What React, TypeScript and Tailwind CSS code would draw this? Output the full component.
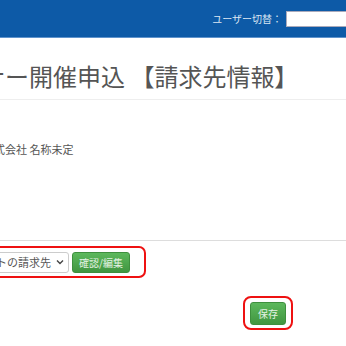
import React from "react";

const font = { fontFamily: '"Noto Sans CJK JP", "Noto Sans", sans-serif' };

export default function App() {
  return (
    <div className="w-[346px] h-[346px] overflow-hidden bg-white" style={font}>
      <header className="h-[38px] bg-[#0d5aa7] border-b border-[#5f93cc] flex items-center justify-end">
        <span className="text-[10px] text-[#dce7f3] mr-[4px]">ユーザー切替：</span>
        <div className="w-[70px] h-[16px] bg-white border border-[#aab] mr-[-10px] shrink-0" />
      </header>

      <div className="w-[346px]">
        <div className="pt-[25px] pb-[10px] border-b border-[#eeeeee]">
          <h1 className="ml-[-67px] whitespace-nowrap text-[24px] leading-[26px] text-[#555555] font-normal">
            セミナー開催申込 【請求先情報】
          </h1>
        </div>

        <div className="mt-[9px] ml-[-40px] whitespace-nowrap text-[13px] leading-[15px] font-bold text-[#c8c8c8]">
          請求先
        </div>

        <div className="mt-[18px] ml-[-17px] whitespace-nowrap text-[11px] leading-[14px] text-[#555555]">
          株式会社 名称未定
        </div>

        <div className="mt-[84px] border-t border-[#dddddd]" />

        <div className="mt-[5px] ml-[-65px] w-[211px] h-[32px] border-2 border-[#ee1111] rounded-[7px] flex items-center pl-[6px] gap-[3px]">
          <div className="w-[126px] h-[21px] border border-[#cccccc] rounded-[3px] bg-white flex items-center justify-between pl-[8px] pr-[4px] shrink-0">
            <span className="text-[11px] text-[#555555] whitespace-nowrap">デフォルトの請求先</span>
            <svg width="8" height="6" viewBox="0 0 8 6" className="shrink-0">
              <path d="M1 1.5 L4 4.5 L7 1.5" stroke="#444" strokeWidth="1.4" fill="none" />
            </svg>
          </div>
          <button className="w-[58px] h-[21px] rounded-[3px] border border-[#3e8f3e] bg-[linear-gradient(to_bottom,#5cb85c,#419641)] text-[10px] text-[#e4f2e4] flex items-center justify-center shrink-0">
            確認/編集
          </button>
        </div>

        <div className="mt-[18px] flex">
          <div className="ml-[243px] w-[50px] h-[34px] border-2 border-[#ee1111] rounded-[8px] flex items-center justify-center">
            <button className="w-[36px] h-[23px] rounded-[3px] border border-[#3e8f3e] bg-[linear-gradient(to_bottom,#5cb85c,#419641)] text-[10px] text-[#e4f2e4] flex items-center justify-center">
              保存
            </button>
          </div>
        </div>
      </div>
    </div>
  );
}
